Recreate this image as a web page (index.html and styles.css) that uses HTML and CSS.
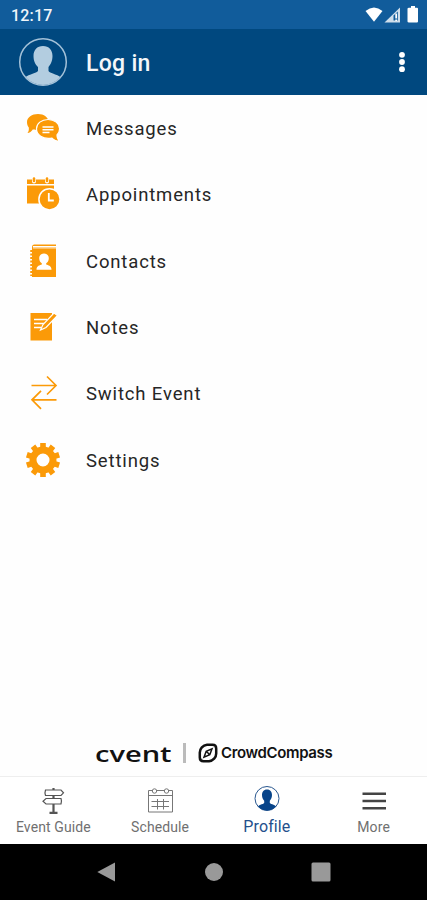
FILE: index.html
```html
<!DOCTYPE html>
<html lang="en">
<head>
    <meta charset="UTF-8">
    <meta name="viewport" content="width=device-width, initial-scale=1.0">
    <title>Profile</title>
    <link rel="stylesheet" href="styles.css">
</head>
<body>
<div class="status-bar">
    <span>12:17</span>
    <svg width="56" height="20" viewBox="0 0 56 20" fill="#fff">
        <path d="M1.500 6Q10 -1 18.500 6L10 16.800Z"/>
        <path d="M20.500 17.500L36 2.500V17.500Z" opacity=".8"/>
        <path d="M29.500 15.500V10.500L33.800 6.500V15.500Z" fill="#115c9b"/>
        <path d="M31.300 8.500H33V13.500H31.300ZM31.300 14.500H33V16H31.300Z"/>
        <path d="M45 2.800H47V1H51V2.800H53Q54 2.800 54 3.800V16.500Q54 17.500 53 17.500H45Q43.500 17.500 43.500 16.500V3.800Q43.500 2.800 45 2.800Z"/>
    </svg>
</div>

<header>
    <svg class="avatar" width="50" height="50" viewBox="0 0 50 50">
        <defs><clipPath id="avatar-clip"><circle cx="25" cy="25" r="23"/></clipPath></defs>
        <path clip-path="url(#avatar-clip)" fill="#b3cde0" d="M25 9C31 9 34.500 13 34.500 19C34.500 25 32 28 30.500 30V34C32 37 42 37 45 43V50H5V43C8 37 18 37 20 34V30C18 28 15.500 25 15.500 19C15.500 13 19 9 25 9Z"/>
        <circle cx="25" cy="25" r="23.300" fill="none" stroke="#a3c1d8" stroke-width="1.500"/>
    </svg>
    <h1>Log in</h1>
    <svg class="overflow" width="8" height="24" viewBox="0 0 8 24" fill="#fff">
        <circle cx="4" cy="4.800" r="2.900"/>
        <circle cx="4" cy="12" r="2.900"/>
        <circle cx="4" cy="19.200" r="2.900"/>
    </svg>
</header>

<main>
    <ul class="menu">
        <li>
            <svg viewBox="0 0 36 36" fill="#fb9a08">
                <path d="M13 4C19 4 23.500 7.500 23.500 12C23.500 17 19 20 13 20C11 20 9.500 19.800 8 19.200C6.500 21.500 4.500 23 2.500 23C3.800 21.500 4 19.500 3.800 17.500C2.500 16 2 14 2 12C2 7.500 7 4 13 4Z"/>
                <path stroke="#fff" stroke-width="1.200" d="M23 9.500C29.500 9.500 34.600 13.500 34.600 18.700C34.600 21.300 33.400 23.500 32 25C32 27.500 33 29.800 34.800 31.300C31.500 31.300 28.500 29.800 27 28.100C17.500 29.800 11.500 24.500 11.500 18.700C11.500 13.500 16.500 9.500 23 9.500Z"/>
                <path stroke="#fff" stroke-width="1.500" d="M17.500 17H28.500M17.500 19.700H28.500M17.500 22.400H24.500"/>
            </svg>
            <span>Messages</span>
        </li>
        <li>
            <svg viewBox="0 0 36 36" fill="#fb9a08">
                <path d="M2 3.500H29V8H2ZM2 9.500H29V27.500H2Z"/>
                <path d="M9 1.800V5.500M22 1.800V5.500" stroke="#fff" stroke-width="4" stroke-linecap="round"/>
                <path d="M9 2.500V5M22 2.500V5" stroke="#fb9a08" stroke-width="2.600" stroke-linecap="round"/>
                <circle cx="24.500" cy="23.300" r="10.600" stroke="#fff" stroke-width="1.500"/>
                <path d="M23.800 17V24.500H28.800" fill="none" stroke="#fff" stroke-width="1.800"/>
            </svg>
            <span>Appointments</span>
        </li>
        <li>
            <svg viewBox="0 0 36 36" fill="#fb9a08">
                <path d="M9 1.500H31V3H8V4.500H31V34H7V4Q7 1.500 9 1.500Z"/>
                <path d="M8 3.800H31" stroke="#fff" stroke-width=".8"/>
                <path d="M8 5.300H31" stroke="#fdc77b" stroke-width="1"/>
                <path d="M6.500 7V33" stroke="#fb9a08" stroke-width="2.500" stroke-dasharray="2 1.500"/>
                <path fill="#fff" d="M19 10.500C22 10.500 23.800 12.500 23.800 15.200C23.800 17.800 22.500 19.300 21.200 20.200V21.500C23 22.300 26.500 22.500 26.500 26.800H11.500C11.500 22.500 15 22.300 16.800 21.500V20.200C15.500 19.300 14.200 17.800 14.200 15.200C14.200 12.500 16 10.500 19 10.500Z"/>
            </svg>
            <span>Contacts</span>
        </li>
        <li>
            <svg viewBox="0 0 36 36" fill="#fb9a08">
                <path d="M5.500 4H27V31.500H5.500Z"/>
                <path d="M9 10.500H22M9 14.500H19M9 18.500H16" stroke="#fff" stroke-width="1.300"/>
                <path d="M15.500 21L18 15.500L29 4L32.500 6.500L21 18.500Z" stroke="#fff" stroke-width="1.200"/>
            </svg>
            <span>Notes</span>
        </li>
        <li>
            <svg viewBox="0 0 36 36" fill="none" stroke="#fb9a08" stroke-width="1.700">
                <path d="M6.500 10.500H31M22 1.500L31 10.500L22 19.500"/>
                <path d="M31.500 24.800H7M16 15.800L7 24.800L16 33.800"/>
            </svg>
            <span>Switch Event</span>
        </li>
        <li>
            <svg viewBox="0 0 36 36" fill="none" stroke="#fb9a08">
                <circle cx="18" cy="18" r="10" stroke-width="7"/>
                <g stroke-width="5.600">
                    <path d="M18 1V7M18 29V35"/>
                    <path d="M18 1V7M18 29V35" transform="rotate(36 18 18)"/>
                    <path d="M18 1V7M18 29V35" transform="rotate(72 18 18)"/>
                    <path d="M18 1V7M18 29V35" transform="rotate(108 18 18)"/>
                    <path d="M18 1V7M18 29V35" transform="rotate(144 18 18)"/>
                </g>
            </svg>
            <span>Settings</span>
        </li>
    </ul>

    <div class="brands">
        <div class="cvent"><span>cvent</span></div>
        <i class="divider"></i>
        <svg width="20" height="20" viewBox="0 0 20 20" fill="none" stroke="#111">
            <path stroke-width="2.500" d="M9 1.800H14.500Q18.200 1.800 18.200 5.500V10.500A8 7.700 0 0 1 11 18.200H5.500Q1.800 18.200 1.800 14.500V9.500A8 7.700 0 0 1 9 1.800Z"/>
            <path stroke-width="1.500" d="M14 5.800L11.800 11.800L6 14.200L8.200 8.200ZM8.500 8.500L11.500 11.500"/>
        </svg>
        <span class="crowd">CrowdCompass</span>
    </div>
</main>

<nav class="tabs">
    <a>
        <svg width="28" height="28" viewBox="0 0 28 28" fill="none" stroke="#555" stroke-width="1.200">
            <path d="M6.500 3H22L24.500 5.800L22 8.500H6.500Q5.500 5.800 6.500 3ZM22 11.500H7L4 14.200L7 17H22Q23 14.200 22 11.500Z"/>
            <path stroke-width="2.200" d="M14.500 1V3M14.500 8.500V11.500M14.500 17V25.500M10.500 25.800H18.500"/>
        </svg>
        <span>Event Guide</span>
    </a>
    <a>
        <svg width="28" height="28" viewBox="0 0 28 28" fill="none" stroke="#777">
            <path d="M6.500 3.500H2.500V25H26.500V3.500H23M11 3.500H18M2.500 8.500H26.500"/>
            <circle cx="8.500" cy="4" r="2.200"/>
            <circle cx="20.500" cy="4" r="2.200"/>
            <path d="M5.500 14.500H23M5.500 19.500H23M11.500 12V22.500M17.500 12V22.500"/>
        </svg>
        <span>Schedule</span>
    </a>
    <a class="active">
        <svg width="28" height="28" viewBox="0 0 28 28">
            <defs><clipPath id="tab-clip"><circle cx="14" cy="13.500" r="12"/></clipPath></defs>
            <circle cx="14" cy="13.500" r="12" fill="#fff" stroke="#29578f"/>
            <path clip-path="url(#tab-clip)" fill="#07448a" d="M14 4.500C17.500 4.500 19 7 19 10C19 13 17.800 14.700 16.800 15.700V18C18 19.500 23 19.500 24 23V28H4V23C5 19.500 10 19.500 11.200 18V15.700C10.200 14.700 9 13 9 10C9 7 10.500 4.500 14 4.500Z"/>
        </svg>
        <span>Profile</span>
    </a>
    <a>
        <svg width="28" height="28" viewBox="0 0 28 28" stroke="#444" stroke-width="2.400">
            <path d="M2.500 6.800H26M2.500 14H26M2.500 21.200H26"/>
        </svg>
        <span>More</span>
    </a>
</nav>

<div class="system-nav">
    <svg width="20" height="20" viewBox="0 0 20 20"><path d="M.3 10L18 .5V19.500Z"/></svg>
    <svg width="20" height="20" viewBox="0 0 20 20"><circle cx="10" cy="10" r="9"/></svg>
    <svg width="20" height="20" viewBox="0 0 20 20"><rect x=".5" y=".5" width="19" height="19" rx="1.500"/></svg>
</div>
</body>
</html>
```
FILE: styles.css
```css
* {
    box-sizing: border-box;
}

body {
    font-family: Roboto, sans-serif;
    background-color: #fefefe;
    margin: 0;
    height: 900px;
    display: flex;
    flex-direction: column;
    overflow: hidden;
}

svg {
    display: block;
    flex-shrink: 0;
}

.status-bar {
    height: 29px;
    padding: 0 7px 0 11px;
    display: flex;
    justify-content: space-between;
    align-items: center;
    background-color: #115c9b;
    color: #f0f5fa;
    font-size: 16px;
    font-weight: 500;
    letter-spacing: 0.2px;
    line-height: 31px;
}

.status-bar span {
    padding-top: 2px;
}

header {
    height: 66px;
    padding: 0 21px 0 18px;
    display: flex;
    align-items: center;
    background-color: #00487f;
}

header h1 {
    margin: 2px 0 0 18px;
    color: #f4f7fa;
    font-size: 23px;
    font-weight: 500;
    letter-spacing: 0.3px;
}

.overflow {
    margin-left: auto;
}

main {
    flex: 1;
    display: flex;
    flex-direction: column;
    justify-content: space-between;
}

.menu {
    list-style: none;
    margin: 0;
    padding: 0;
}

.menu li {
    height: 66.3px;
    padding-left: 25px;
    display: flex;
    align-items: center;
    gap: 25px;
    color: #262626;
    font-size: 18.5px;
    letter-spacing: 0.85px;
}

.menu svg {
    width: 36px;
    height: 36px;
}

.menu span {
    padding-top: 2px;
}

.brands {
    height: 47px;
    padding-left: 95px;
    display: flex;
    align-items: center;
    color: #111;
}

/* stretched wordmark */
.cvent {
    width: 88px;
    font-family: "Open Sans", sans-serif;
    font-size: 22px;
    font-weight: 600;
    line-height: 24px;
}

.cvent span {
    display: inline-block;
    transform: scaleX(1.32);
    transform-origin: left;
}

.divider {
    width: 3px;
    height: 20px;
    margin-right: 12px;
    background-color: #bbb;
}

.crowd {
    margin-left: 3px;
    font-family: Inter, sans-serif;
    font-size: 15px;
    font-weight: 600;
    letter-spacing: -0.35px;
}

.tabs {
    height: 68px;
    display: flex;
    border-top: 1px solid #eee;
    background-color: #fff;
}

.tabs a {
    flex: 1;
    display: flex;
    flex-direction: column;
    align-items: center;
    padding-top: 10px;
    color: #707070;
    font-size: 14px;
    line-height: 16px;
    letter-spacing: 0.1px;
}

.tabs span {
    margin-top: 4px;
}

.tabs .active {
    padding-top: 8px;
    color: #24508c;
    font-size: 16px;
}

.tabs .active span {
    margin-top: 6px;
}

.system-nav {
    height: 56px;
    display: flex;
    justify-content: center;
    align-items: center;
    gap: 87px;
    background-color: #000;
    fill: #999;
}
```
